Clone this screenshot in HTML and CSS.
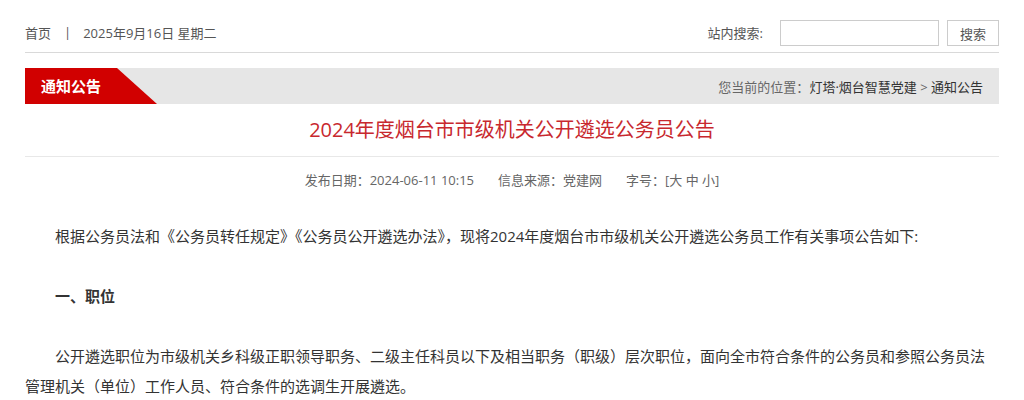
FILE: index.html
```html
<!DOCTYPE html>
<html lang="zh-CN">
<head>
<meta charset="utf-8">
<title>2024年度烟台市市级机关公开遴选公务员公告</title>
<link rel="stylesheet" href="styles.css">
</head>
<body>
<div class="page">
  <header class="topbar">
    <div class="top-left">
      <a class="home" href="#">首页</a>
      <span class="sep">|</span>
      <span class="date">2025年9月16日 星期二</span>
    </div>
    <form class="search">
      <label class="search-label">站内搜索:</label>
      <input class="search-input" type="text">
      <button class="search-btn" type="button">搜索</button>
    </form>
  </header>

  <div class="column-bar">
    <div class="column-tab">通知公告</div>
    <div class="crumbs">您当前的位置：<a href="#">灯塔·烟台智慧党建</a> &gt; <a href="#">通知公告</a></div>
  </div>

  <h1 class="title">2024年度烟台市市级机关公开遴选公务员公告</h1>

  <div class="meta">
    <span>发布日期：2024-06-11 10:15</span>
    <span>信息来源：党建网</span>
    <span>字号：[大 中 小]</span>
  </div>

  <div class="article">
    <p>根据公务员法和《公务员转任规定》《公务员公开遴选办法》，现将2024年度烟台市市级机关公开遴选公务员工作有关事项公告如下:</p>
    <p class="heading">一、职位</p>
    <p>公开遴选职位为市级机关乡科级正职领导职务、二级主任科员以下及相当职务（职级）层次职位，面向全市符合条件的公务员和参照公务员法管理机关（单位）工作人员、符合条件的选调生开展遴选。</p>
  </div>
</div>
</body>
</html>
```
FILE: styles.css
```css
* { box-sizing: border-box; }
body {
  margin: 0;
  background: #fff;
  font-family: "Open Sans", "Noto Sans CJK SC", sans-serif;
  color: #333;
}
a { color: inherit; text-decoration: none; }
.page {
  width: 974px;
  margin: 0 auto;
}
.topbar {
  display: flex;
  justify-content: space-between;
  align-items: center;
  padding: 20px 0 6px;
  border-bottom: 1px solid #d9d9d9;
  font-size: 13px;
  color: #555;
}
.top-left { display: flex; align-items: center; margin-top: -2px; }
.sep { margin: 0 12px 0 13px; }
.search { display: flex; align-items: center; margin: 0; }
.search-label { margin-right: 17px; margin-top: -2px; }
.search-input {
  width: 159px;
  height: 26px;
  border: 1px solid #ccc;
  margin: 0 8px 0 0;
  padding: 0 4px;
  outline: none;
}
.search-btn {
  width: 52px;
  height: 26px;
  border: 1px solid #ccc;
  background: #fff;
  color: #555;
  font: inherit;
  font-size: 13px;
  padding: 0;
}
.column-bar {
  margin-top: 15px;
  height: 36px;
  background: #e6e6e6;
  display: flex;
  justify-content: space-between;
  align-items: center;
}
.column-tab {
  height: 36px;
  width: 132px;
  background: #d10000;
  clip-path: polygon(0 0, 92px 0, 132px 100%, 0 100%);
  color: #fff;
  font-size: 15px;
  font-weight: bold;
  line-height: 36px;
  padding-left: 16px;
}
.crumbs {
  font-size: 13px;
  color: #666;
  padding-right: 16px;
}
.crumbs a { color: #333; }
.title {
  margin: 0;
  line-height: 52px;
  font-size: 20px;
  font-weight: normal;
  color: #c8282e;
  text-align: center;
  border-bottom: 1px solid #e8e8e8;
}
.meta {
  display: flex;
  justify-content: center;
  gap: 24px;
  line-height: 46px;
  font-size: 13px;
  color: #666;
}
.article {
  padding-top: 18px;
  font-size: 15px;
  line-height: 30px;
  color: #333;
}
.article p {
  margin: 0 0 30px;
  text-indent: 2em;
}
.article .heading { font-weight: bold; }
```
